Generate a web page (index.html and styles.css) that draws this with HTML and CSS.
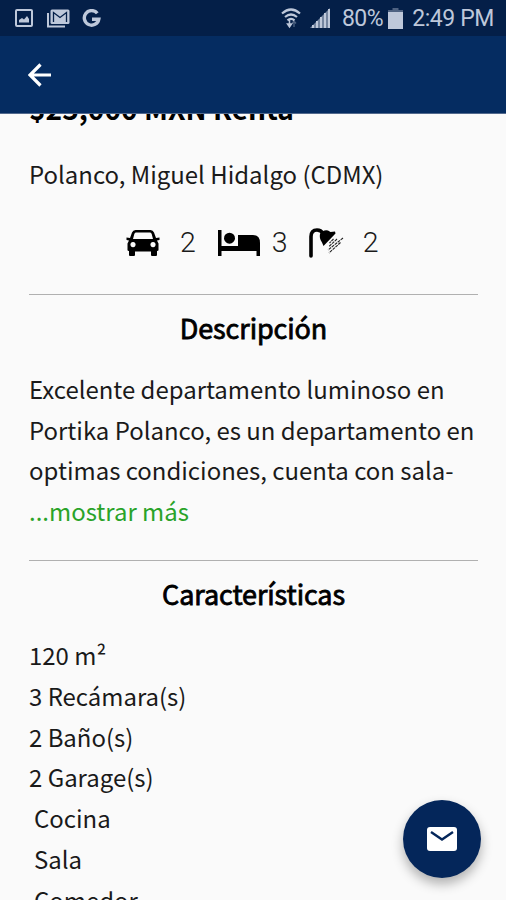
FILE: index.html
```html
<!DOCTYPE html>
<html lang="es">
<head>
  <meta charset="UTF-8" />
  <meta name="viewport" content="width=device-width, initial-scale=1.0" />
  <title>Polanco, Miguel Hidalgo</title>
  <link rel="stylesheet" href="styles.css">
</head>
<body>

  <!-- Status bar -->
  <div class="status-bar">
    <div class="status-left">
      <svg width="18" height="18" viewBox="0 0 18 18">
        <rect x="1" y="1" width="16" height="16" rx="1" fill="none" stroke="currentColor" stroke-width="2" />
        <path d="M4 13.500V11l3-2 2 1.500 3-3.500 2 3v3.500z" fill="currentColor" />
      </svg>
      <svg class="mail-status" width="23" height="19" viewBox="0 0 23 19">
        <path d="M1 4v13.500h17" fill="none" stroke="currentColor" stroke-width="2" />
        <rect x="3.500" y="0.500" width="19" height="14.500" rx="1.500" fill="currentColor" />
        <path d="M6.500 13V3.500l6.500 5 6.500-5V13" fill="none" stroke="#041f48" stroke-width="1.300" />
      </svg>
      <svg class="google" width="19" height="19" viewBox="0 0 19 19">
        <path d="M15.300 4.300A7.300 7.300 0 1 0 16.800 10.200H10" fill="none" stroke="currentColor" stroke-width="3.400" />
      </svg>
    </div>
    <div class="status-right">
      <svg class="wifi" width="20" height="21" viewBox="0 0 20 21">
        <path d="M1 5.500q9-8 18 0M4 9q6-5 12 0M6.500 12.300q3.500-3 7 0" fill="none" stroke="currentColor" stroke-width="2.200" />
        <path d="M8.500 11.500v5M6.500 16h4l-2 3z" fill="currentColor" stroke="currentColor" stroke-width="1.500" />
        <path d="M13 19v-5M11 15.500l2-2.500 2 2.500" fill="none" stroke="currentColor" stroke-width="1.300" opacity="0.400" />
      </svg>
      <svg class="signal" width="20" height="20" viewBox="0 0 20 20">
        <path d="M0 20L20 0v20z" fill="currentColor" opacity="0.600" />
        <path d="M3 17v3M7 13v7M11 9v11M15 5v15M19 1v19" stroke="currentColor" stroke-width="2" />
      </svg>
      <span class="percent">80%</span>
      <svg class="battery" width="15" height="21" viewBox="0 0 15 21">
        <path d="M4.500 0h6v2H15v3H0V2h4.500z" fill="currentColor" opacity="0.400" />
        <path d="M0 4h15v17H0z" fill="currentColor" />
      </svg>
      <span class="time">2:49 PM</span>
    </div>
  </div>

  <header class="app-bar">
    <svg width="24" height="24" viewBox="0 0 24 24">
      <path d="M23 12H2.500M12.500 1.500L2 12l10.500 10.500" fill="none" stroke="#fff" stroke-width="3.200" />
    </svg>
  </header>

  <main class="content">
    <h1 class="price">$25,000 MXN Renta</h1>
    <p class="address">Polanco, Miguel Hidalgo (CDMX)</p>

    <div class="summary">
      <svg class="car" width="34" height="26" viewBox="0 0 34 26">
        <path fill-rule="evenodd" d="M9.500 0h15q2.500 0 3.500 2.500L30 8l3.500-.5v2.500L31 10.500l1.500 3V20q0 1-1.500 1v4q0 1-1 1h-4q-1 0-1-1v-3.500H9V25q0 1-1 1H4q-1 0-1-1v-4q-1.500 0-1.500-1v-6.500l1.500-3-2.500-.5V7.500L4 8l2-5.500Q7 0 9.500 0zM9.800 2.500Q8.800 2.500 8.300 4L7 9h20l-1.300-5q-.5-1.500-1.500-1.500zM7 12a2.600 2.600 0 1 0 .01 0zM27 12a2.600 2.600 0 1 0 .01 0z" />
      </svg>
      <span class="count count-car">2</span>
      <svg class="bed" width="42" height="26" viewBox="0 0 42 26">
        <path d="M0 0h3.500v16H20V5h15q7 0 7 8v13h-3.500v-5h-35v5H0z" />
        <circle cx="11.500" cy="8.200" r="5.500" />
      </svg>
      <span class="count count-bed">3</span>
      <svg class="shower" width="35" height="30" viewBox="0 0 35 30">
        <path d="M2 28V8.500Q2 2 8 2q4 0 6 3.500" fill="none" stroke="#000" stroke-width="3.600" stroke-linecap="round" />
        <path d="M11 6q3-4.500 8-3.500l2.500 1.500 4.500-.5.500 2-12 12.500-1.500-3.500q-3-4-2-8.500z" />
        <path d="M24.500 11l-4 4M28 11l-8 7.500M34 10L19 22M31.500 14.500L20 25" fill="none" stroke="#222" stroke-width="1.100" stroke-dasharray="3 0.800" />
      </svg>
      <span class="count count-bath">2</span>
    </div>

    <section class="block">
      <h2>Descripción</h2>
      <p class="description">Excelente departamento luminoso en<br>Portika Polanco, es un departamento en<br>optimas condiciones, cuenta con sala-<br><a class="more">...mostrar más</a></p>
    </section>

    <section class="block">
      <h2>Características</h2>
      <ul class="features">
        <li>120 m²</li>
        <li>3 Recámara(s)</li>
        <li>2 Baño(s)</li>
        <li>2 Garage(s)</li>
        <li class="extra">Cocina</li>
        <li class="extra">Sala</li>
        <li class="extra">Comedor</li>
      </ul>
    </section>
  </main>

  <button class="fab" aria-label="Contactar">
    <svg width="30" height="24" viewBox="0 0 30 24">
      <rect width="30" height="24" rx="3" fill="#fff" />
      <path d="M4 5l11 7.500L26 5" fill="none" stroke="#04265a" stroke-width="2.400" />
    </svg>
  </button>

</body>
</html>
```
FILE: styles.css
```css
* {
  box-sizing: border-box;
}

body {
  margin: 0;
  height: 100vh;
  display: flex;
  flex-direction: column;
  overflow: hidden;
  background-color: #fafafa;
  color: #1a1a1a;
  font-family: "Noto Sans CJK SC", sans-serif;
  font-size: 23.95px;
  line-height: 40.8px;
}

h1, h2, p, ul {
  margin: 0;
  padding: 0;
}

svg {
  display: block;
  flex: none;
}

.status-bar {
  flex: none;
  display: flex;
  justify-content: space-between;
  height: 36px;
  padding: 0 12px 0 15px;
  background-color: #041f48;
  color: #bec8da;
  font-family: Roboto, sans-serif;
  font-size: 23px;
  line-height: 38px;
}

.status-left,
.status-right {
  display: flex;
  align-items: center;
}

.percent,
.time {
  padding-top: 2px;
}

.mail-status {
  margin-left: 14px;
}

.google {
  margin-left: 12px;
}

.signal {
  margin-left: 9px;
}

.percent {
  margin-left: 12px;
  letter-spacing: -0.5px;
}

.battery {
  margin-left: 5px;
}

.time {
  margin-left: 9px;
  letter-spacing: -0.4px;
}

.app-bar {
  flex: none;
  display: flex;
  align-items: center;
  height: 78px;
  padding-left: 28px;
  background-color: #052c61;
  border-bottom: 1px solid #52698d;
}

.content {
  flex: 1;
  min-height: 0;
  overflow: hidden;
  padding: 0 28px 0 29px;
}

.price {
  margin-top: -26px;
  font-size: 28.1px;
  line-height: 40px;
  font-weight: 700;
  color: #000;
}

.address {
  margin-top: 26px;
}

.summary {
  display: flex;
  align-items: center;
  height: 40px;
  margin-top: 28px;
  padding-left: 97px;
}

.count {
  padding-top: 2px;
  font-family: Roboto, sans-serif;
  font-size: 28.5px;
  font-weight: 300;
}

.count-car {
  margin: 0 22px 0 20px;
}

.count-bed {
  margin: 0 21px 0 12px;
}

.count-bath {
  margin-left: 19px;
}

.block {
  margin-top: 31px;
  padding-top: 12px;
  border-top: 1px solid #b0b0b0;
}

.block + .block {
  margin-top: 28px;
}

h2 {
  margin-bottom: 21px;
  font-size: 27px;
  line-height: 41px;
  font-weight: 400;
  letter-spacing: -0.1px;
  text-align: center;
  color: #000;
  -webkit-text-stroke: 0.8px #000;
}

.description {
  white-space: nowrap;
}

.more {
  color: #29a329;
}

.features {
  list-style: none;
}

.extra {
  padding-left: 5px;
}

.fab {
  position: fixed;
  right: 25px;
  bottom: 22px;
  display: flex;
  align-items: center;
  justify-content: center;
  width: 78px;
  height: 78px;
  padding: 0;
  border: none;
  border-radius: 50%;
  background-color: #04265a;
  box-shadow: 0 6px 12px rgba(0, 0, 0, 0.3);
}
```
